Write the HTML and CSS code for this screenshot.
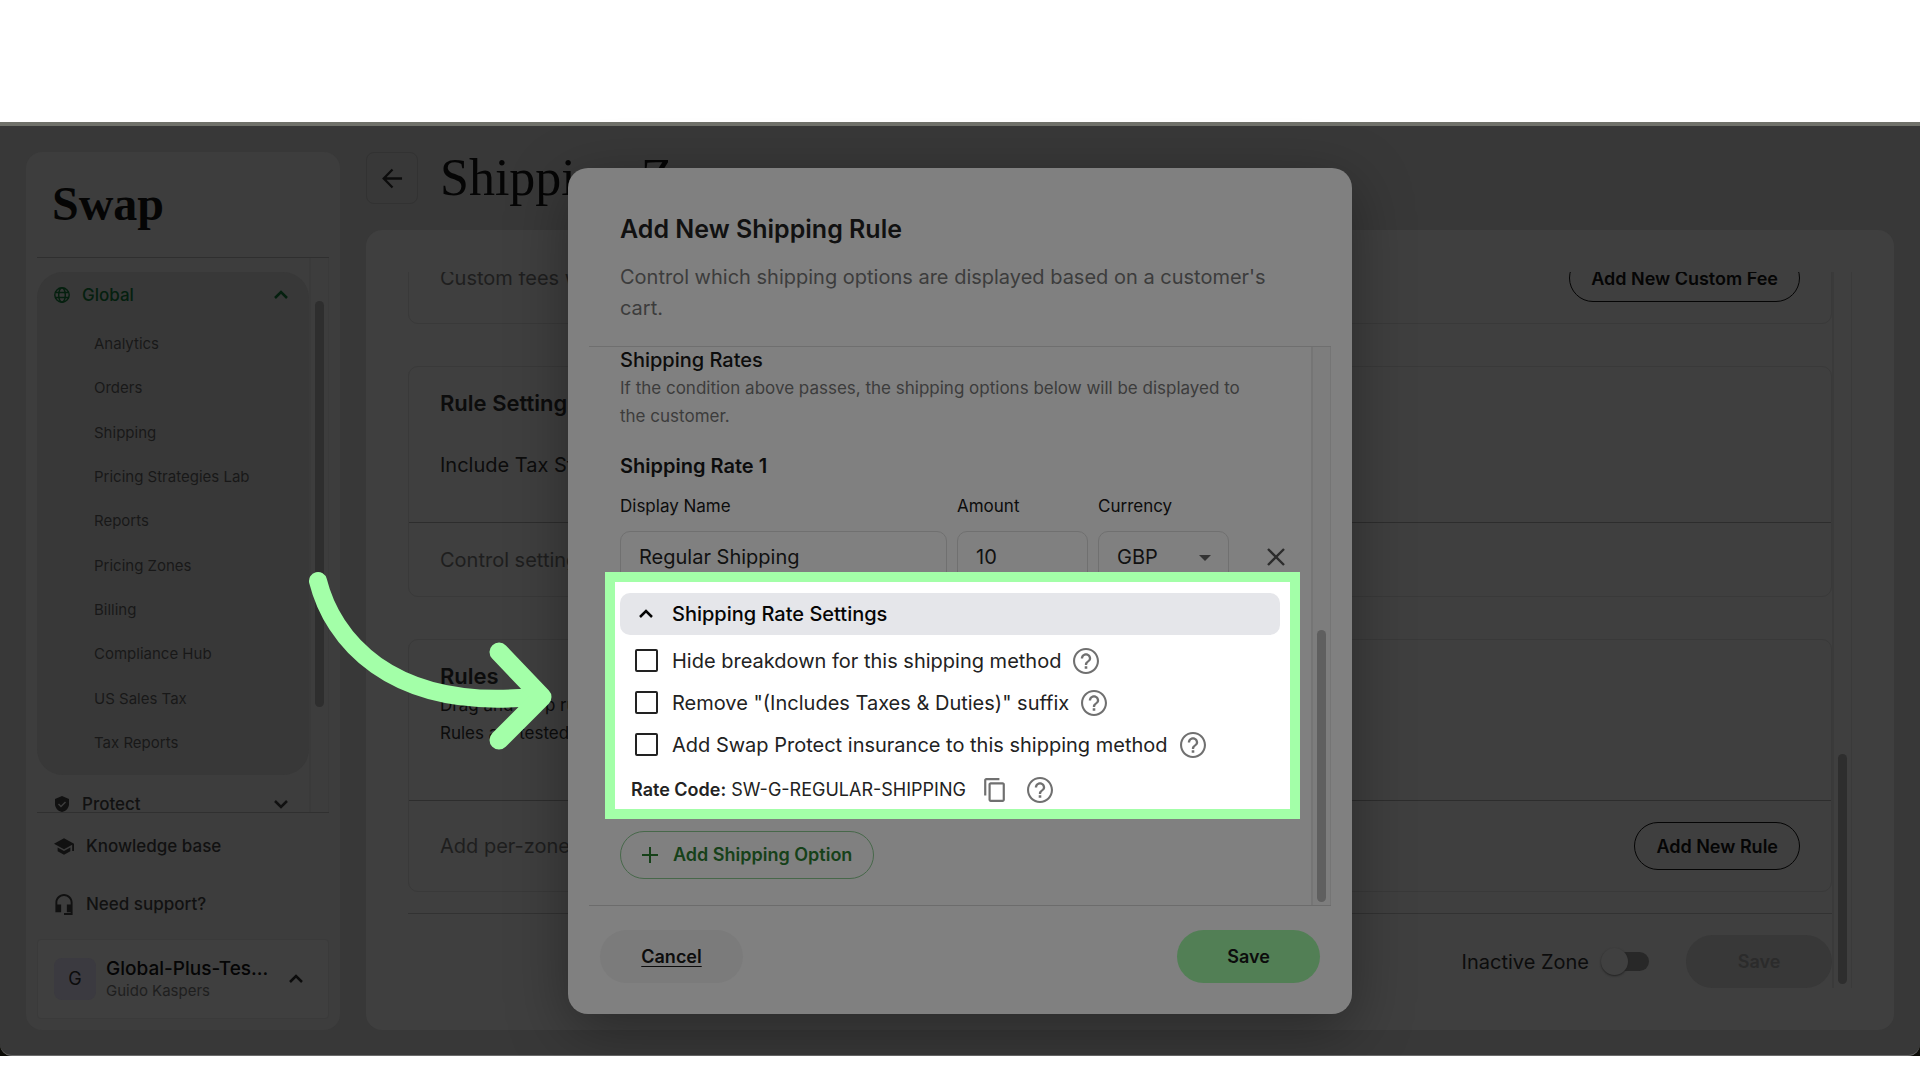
FILE: index.html
```html
<!DOCTYPE html>
<html lang="en">
  <head>
    <meta charset="UTF-8" />
    <meta name="viewport" content="width=device-width, initial-scale=1.0" />
    <title>Swap - Shipping Zone</title>
    <link rel="stylesheet" href="styles.css">
  </head>
  <body>
    <svg class="defs" width="0" height="0" aria-hidden="true">
      <symbol id="icon-help" viewBox="2 2 20 20">
        <path d="M11 18h2v-2h-2v2zm1-16C6.480 2 2 6.480 2 12s4.480 10 10 10 10-4.480 10-10S17.520 2 12 2zm0 18.400c-4.630 0-8.400-3.770-8.400-8.400S7.370 3.600 12 3.600s8.400 3.770 8.400 8.400-3.770 8.400-8.400 8.400zm0-14.400c-2.210 0-4 1.790-4 4h1.800c0-1.200 1-2.200 2.200-2.200s2.200 1 2.200 2.200c0 2-3.100 1.750-3.100 5h1.800c0-2.250 3.100-2.500 3.100-5 0-2.210-1.790-4-4-4z" />
      </symbol>
      <symbol id="icon-up" viewBox="0 0 16 16">
        <path d="M2 11l6-6 6 6" fill="none" stroke="currentColor" stroke-width="2.500" />
      </symbol>
      <symbol id="icon-down" viewBox="0 0 16 16">
        <path d="M2 5l6 6 6-6" fill="none" stroke="currentColor" stroke-width="2.500" />
      </symbol>
    </svg>

    <div class="screen">
    <div class="window">
      <aside class="sidebar">
        <div class="logo">Swap</div>

        <div class="nav-scroll">
          <nav class="nav">
            <div class="nav-group">
              <button class="nav-head active">
                <svg class="nav-icon" viewBox="0 0 16 16" fill="none" stroke="currentColor" stroke-width="1.400">
                  <circle cx="8" cy="8" r="7.200" />
                  <ellipse cx="8" cy="8" rx="3.300" ry="7.200" />
                  <path d="M1.500 5.500h13M1.500 10.500h13" />
                </svg>
                <span>Global</span>
                <svg class="chevron"><use href="#icon-up" /></svg>
              </button>
              <ul class="nav-list">
                <li><a href="#">Analytics</a></li>
                <li><a href="#">Orders</a></li>
                <li><a href="#">Shipping</a></li>
                <li><a href="#">Pricing Strategies Lab</a></li>
                <li><a href="#">Reports</a></li>
                <li><a href="#">Pricing Zones</a></li>
                <li><a href="#">Billing</a></li>
                <li><a href="#">Compliance Hub</a></li>
                <li><a href="#">US Sales Tax</a></li>
                <li><a href="#">Tax Reports</a></li>
              </ul>
            </div>
            <button class="nav-head">
              <svg class="nav-icon" viewBox="0 0 16 16">
                <path d="M8 0L1 3v5c0 4 3 7.200 7 8 4-.8 7-4 7-8V3z" fill="currentColor" />
                <path d="M4.500 8l2.500 2.500 4.500-4.500" fill="none" stroke="#3d3d3d" stroke-width="1.500" />
              </svg>
              <span>Protect</span>
              <svg class="chevron"><use href="#icon-down" /></svg>
            </button>
          </nav>
          <div class="track"><div class="thumb nav-thumb"></div></div>
        </div>

        <div class="side-links">
          <a href="#">
            <svg viewBox="1 3 22 18" fill="currentColor"><path d="M5 13.180v4L12 21l7-3.820v-4L12 17l-7-3.820zM12 3L1 9l11 6 9-4.910V17h2V9L12 3z" /></svg>
            Knowledge base
          </a>
          <a href="#">
            <svg class="headset" viewBox="3 1 18 22" fill="currentColor"><path d="M12 1c-4.970 0-9 4.030-9 9v10h6v-8H5v-2c0-3.870 3.130-7 7-7s7 3.130 7 7v2h-4v8h4v1h-7v2h9V10c0-4.970-4.030-9-9-9z" /></svg>
            Need support?
          </a>
        </div>

        <button class="account">
          <span class="avatar">G</span>
          <span class="account-text">
            <span class="account-name">Global-Plus-Tes...</span>
            <span class="account-user">Guido Kaspers</span>
          </span>
          <svg class="chevron"><use href="#icon-up" /></svg>
        </button>
      </aside>

      <main class="main">
        <header class="page-head">
          <button class="back" aria-label="Back">
            <svg viewBox="0 0 22 22" fill="none" stroke="currentColor" stroke-width="2.400"><path d="M21 11H2M11 1.500L1.800 11l9.200 9.500" /></svg>
          </button>
          <h1>Shipping Zone</h1>
        </header>

        <div class="panel">
          <div class="panel-scroll">
            <section class="card">
              <div class="card-foot">
                <span>Custom fees will be added</span>
                <button class="outline-btn">Add New Custom Fee</button>
              </div>
            </section>

            <section class="card">
              <div class="card-body settings-body">
                <h2>Rule Settings</h2>
                <p class="option">Include Tax Strategy</p>
              </div>
              <div class="card-foot short">
                <span>Control settings</span>
              </div>
            </section>

            <section class="card">
              <div class="card-body rules-body">
                <h2>Rules</h2>
                <p>Drag and drop rules</p>
                <p>Rules are tested</p>
              </div>
              <div class="card-foot">
                <span>Add per-zone rules</span>
                <button class="outline-btn">Add New Rule</button>
              </div>
            </section>

            <footer class="panel-foot">
              <label for="zone-active">Inactive Zone</label>
              <input type="checkbox" id="zone-active" class="switch" />
              <button class="pill disabled" disabled>Save</button>
            </footer>
          </div>
          <div class="track"><div class="thumb panel-thumb"></div></div>
        </div>
      </main>

      <div class="overlay">
        <div class="modal" role="dialog" aria-labelledby="modal-title">
          <header class="modal-head">
            <h2 id="modal-title">Add New Shipping Rule</h2>
            <p>Control which shipping options are displayed based on a customer's cart.</p>
          </header>

          <div class="modal-scroll">
            <div class="modal-body">
              <h3>Shipping Rates</h3>
              <p class="hint">If the condition above passes, the shipping options below will be displayed to the customer.</p>
              <h4>Shipping Rate 1</h4>

              <div class="fields">
                <div class="field name">
                  <label for="rate-name">Display Name</label>
                  <input type="text" id="rate-name" value="Regular Shipping" />
                </div>
                <div class="field">
                  <label for="rate-amount">Amount</label>
                  <input type="text" id="rate-amount" value="10" />
                </div>
                <div class="field">
                  <label for="rate-currency">Currency</label>
                  <div class="select">
                    <select id="rate-currency"><option>GBP</option></select>
                  </div>
                </div>
                <button class="remove" aria-label="Remove rate">
                  <svg viewBox="0 0 18 18" fill="none" stroke="currentColor" stroke-width="2.400"><path d="M1 1l16 16M17 1L1 17" /></svg>
                </button>
              </div>

              <div class="highlight">
                <button class="settings-head">
                  <svg class="chevron"><use href="#icon-up" /></svg>
                  Shipping Rate Settings
                </button>
                <div class="check-row">
                  <input type="checkbox" id="hide-breakdown" />
                  <label for="hide-breakdown">Hide breakdown for this shipping method</label>
                  <svg class="help"><use href="#icon-help" /></svg>
                </div>
                <div class="check-row">
                  <input type="checkbox" id="remove-suffix" />
                  <label for="remove-suffix">Remove "(Includes Taxes &amp; Duties)" suffix</label>
                  <svg class="help"><use href="#icon-help" /></svg>
                </div>
                <div class="check-row">
                  <input type="checkbox" id="add-protect" />
                  <label for="add-protect">Add Swap Protect insurance to this shipping method</label>
                  <svg class="help"><use href="#icon-help" /></svg>
                </div>
                <div class="code-row">
                  <span><b>Rate Code:</b> SW-G-REGULAR-SHIPPING</span>
                  <svg class="copy" viewBox="2 1 19 22"><path d="M16 1H4c-1.100 0-2 .9-2 2v14h2V3h12V1zm3 4H8c-1.100 0-2 .9-2 2v14c0 1.100.9 2 2 2h11c1.100 0 2-.9 2-2V7c0-1.100-.9-2-2-2zm0 16H8V7h11v14z" /></svg>
                  <svg class="help"><use href="#icon-help" /></svg>
                </div>
              </div>

              <button class="add-option">
                <svg viewBox="0 0 16 16" fill="none" stroke="currentColor" stroke-width="2"><path d="M8 0v16M0 8h16" /></svg>
                Add Shipping Option
              </button>
            </div>
            <div class="track"><div class="thumb modal-thumb"></div></div>
          </div>

          <footer class="modal-foot">
            <button class="pill cancel">Cancel</button>
            <button class="pill save">Save</button>
          </footer>
        </div>
      </div>

      <svg class="arrow" viewBox="0 0 252 186" fill="none" stroke="#a3ffa8" stroke-linecap="round" stroke-linejoin="round">
        <path d="M14 15C28 71 84 145 228 131" stroke-width="18" />
        <path d="M195 86L238 131L195 174" stroke-width="19" />
      </svg>
    </div>
    </div>
  </body>
</html>
```
FILE: styles.css
```css
* {
  box-sizing: border-box;
}
body {
  margin: 0;
  background-color: #fff;
  font-family: Inter, "Liberation Sans", sans-serif;
  font-size: 20px;
  color: #0c0c0c;
}
h1,
h2,
h3,
h4,
p,
ul {
  margin: 0;
  padding: 0;
}
button {
  font-family: inherit;
  color: inherit;
  border: none;
  background: none;
  padding: 0;
  cursor: pointer;
}
a {
  color: inherit;
  text-decoration: none;
}
svg {
  flex-shrink: 0;
}
.defs {
  position: absolute;
}
.screen {
  margin-top: 122px;
  background-color: #0b0b06;
}
.window {
  position: relative;
  display: flex;
  gap: 26px;
  height: calc(100vh - 146px);
  padding: 26px 26px 25px;
  background-color: #383838;
  border-top: 4px solid #70716a;
  border-bottom: 1px solid #6b6b6b;
  border-radius: 0 0 12px 12px;
}

/* Sidebar */
.sidebar {
  display: flex;
  flex-direction: column;
  flex-shrink: 0;
  width: 314px;
  padding: 0 11px 11px;
  background-color: #3d3d3d;
  border-radius: 16px;
}
.logo {
  height: 106px;
  padding: 22px 15px 0;
  border-bottom: 1px solid #2f2f2f;
  font-family: "Liberation Serif", serif;
  font-weight: bold;
  font-size: 48px;
  line-height: 60px;
  color: #050505;
}
.nav-scroll {
  display: flex;
  flex: 1;
  min-height: 0;
  overflow: hidden;
  border-bottom: 1px solid #303030;
}
.nav {
  flex: 1;
  padding-top: 14px;
}
.nav-group {
  margin-bottom: 6px;
  padding-bottom: 22px;
  background-color: #383838;
  border-radius: 26px;
}
.nav-head {
  display: flex;
  align-items: center;
  gap: 12px;
  width: 100%;
  height: 46px;
  padding: 0 20px 0 17px;
  font-size: 17px;
  font-weight: 500;
  text-align: left;
  color: #111;
}
.nav-head.active {
  color: #05200f;
}
.nav-head span {
  flex: 1;
}
.nav-icon {
  width: 16px;
  height: 16px;
}
.chevron {
  width: 16px;
  height: 16px;
}
.nav-list {
  display: flex;
  flex-direction: column;
  justify-content: space-between;
  height: 435px;
  padding: 16px 0 0 57px;
  list-style: none;
  font-size: 15px;
  line-height: 20px;
  color: #181818;
}
.track {
  flex-shrink: 0;
  width: 20px;
  padding: 0 4px;
  border-left: 2px solid #3a3a3a;
  border-right: 1px solid #3a3a3a;
}
.thumb {
  border-radius: 5px;
  background-color: #2e2e2e;
}
.nav-thumb {
  height: 406px;
  margin-top: 43px;
}
.side-links {
  padding-top: 4px;
}
.side-links a {
  display: flex;
  align-items: center;
  gap: 12px;
  height: 58px;
  padding-left: 17px;
  font-size: 17px;
  font-weight: 500;
  color: #111;
}
.side-links svg {
  width: 20px;
  height: 17px;
}
.side-links .headset {
  height: 21px;
}
.account {
  display: flex;
  align-items: center;
  gap: 10px;
  height: 80px;
  margin-top: 6px;
  padding: 0 24px 0 16px;
  background-color: #3f3f3f;
  border: 1px solid #3a3a3a;
  border-radius: 4px;
  text-align: left;
}
.avatar {
  width: 42px;
  height: 42px;
  border-radius: 8px;
  background-color: #3b3a40;
  font-size: 18px;
  line-height: 42px;
  text-align: center;
}
.account-text {
  flex: 1;
}
.account-name {
  display: block;
  font-size: 19px;
  font-weight: 500;
  line-height: 24px;
  color: #050505;
}
.account-user {
  display: block;
  font-size: 15px;
  line-height: 20px;
  color: #1e1e1e;
}

/* Page behind the modal */
.main {
  display: flex;
  flex-direction: column;
  flex: 1;
  gap: 26px;
  min-width: 0;
}
.page-head {
  display: flex;
  align-items: center;
  gap: 22px;
  height: 52px;
}
.back {
  display: flex;
  align-items: center;
  justify-content: center;
  width: 52px;
  height: 52px;
  border: 1px solid #323232;
  border-radius: 8px;
}
.back svg {
  width: 21px;
  height: 21px;
}
h1 {
  font-family: "Liberation Serif", serif;
  font-size: 52px;
  font-weight: normal;
  line-height: 52px;
  color: #050505;
}
.panel {
  display: flex;
  flex: 1;
  min-height: 0;
  padding: 42px;
  background-color: #3f3f3f;
  border-radius: 16px;
}
.panel-scroll {
  display: flex;
  flex: 1;
  flex-direction: column;
  justify-content: flex-end;
  gap: 42px;
  overflow: hidden;
}
.card {
  flex-shrink: 0;
  border: 1px solid #393939;
  border-radius: 10px;
}
.card-body {
  padding: 21px 31px;
  border-bottom: 1px solid #2d2d2d;
}
.card-body p {
  font-size: 17px;
  line-height: 28px;
}
.card-body .option {
  margin-top: 32px;
  font-size: 20px;
  line-height: 30px;
}
.settings-body {
  height: 156px;
}
.rules-body {
  height: 161px;
}
.card h2 {
  font-size: 22px;
  font-weight: 600;
  line-height: 30px;
}
.card-foot {
  display: flex;
  align-items: center;
  justify-content: space-between;
  padding: 21px 31px;
  color: #1e1e1e;
}
.card-foot.short {
  height: 73px;
}
.outline-btn {
  height: 48px;
  padding: 0 21px;
  border: 1px solid #050505;
  border-radius: 24px;
  font-size: 18px;
  font-weight: 600;
  color: #050505;
}
.panel-foot {
  display: flex;
  align-items: center;
  justify-content: flex-end;
  margin-top: -21px;
  padding-top: 21px;
  border-top: 1px solid #323232;
}
.switch {
  appearance: none;
  display: flex;
  align-items: center;
  width: 40px;
  height: 19px;
  margin: 0 37px 0 20px;
  border-radius: 10px;
  background-color: #282828;
}
.switch::before {
  content: "";
  flex-shrink: 0;
  width: 27px;
  height: 27px;
  margin-left: -8px;
  border-radius: 50%;
  background-color: #404040;
  box-shadow: 0 1px 2px #222;
}
.pill {
  width: 143px;
  height: 53px;
  border-radius: 27px;
  font-size: 18px;
  font-weight: 600;
}
.pill.disabled {
  width: 146px;
  background-color: #383838;
  color: #2b2b2b;
}
.panel-thumb {
  height: 230px;
  margin-top: 482px;
}

/* Modal */
.overlay {
  position: absolute;
  inset: 0;
  display: flex;
  align-items: center;
  justify-content: center;
}
.modal {
  width: 784px;
  padding: 0 21px 31px;
  background-color: #808080;
  border-radius: 20px;
  box-shadow: 0 16px 60px rgba(0, 0, 0, 0.35);
}
.modal-head {
  padding: 43px 31px 22px;
  border-bottom: 1px solid #6f6f6f;
}
.modal-head h2 {
  font-size: 25px;
  font-weight: 600;
  line-height: 36px;
  color: #111;
}
.modal-head p {
  margin-top: 15px;
  line-height: 31px;
  color: #3c3c3c;
}
.modal-scroll {
  display: flex;
  border-bottom: 1px solid #6c6c6c;
}
.modal-scroll .track {
  background-color: #7d7d7d;
  border-color: #757575;
}
.modal-body {
  flex: 1;
  min-width: 0;
  padding: 0 24px 26px 31px;
}
h3 {
  font-size: 20px;
  font-weight: 500;
  line-height: 26px;
}
.hint {
  margin-top: 1px;
  padding-right: 24px;
  font-size: 17px;
  line-height: 28px;
  color: #3c3c3c;
}
h4 {
  margin-top: 22px;
  font-size: 20px;
  font-weight: 600;
  line-height: 28px;
}
.fields {
  display: flex;
  align-items: flex-end;
  gap: 10px;
  margin-top: 13px;
}
.field {
  width: 131px;
}
.field.name {
  width: 327px;
}
.field label {
  display: block;
  margin-bottom: 12px;
  font-size: 17px;
  line-height: 26px;
}
.field input,
.field select {
  appearance: none;
  display: block;
  width: 100%;
  height: 52px;
  padding: 0 18px;
  background: none;
  border: 1px solid #707070;
  border-radius: 10px;
  font-family: inherit;
  font-size: 20px;
  color: #111;
}
.select {
  position: relative;
}
.select::after {
  content: "";
  position: absolute;
  top: 24px;
  right: 18px;
  border: 6px solid transparent;
  border-top-color: #333;
  border-bottom: none;
}
.remove {
  display: flex;
  align-items: center;
  justify-content: center;
  width: 22px;
  height: 52px;
  margin-left: auto;
  color: #2c2c2c;
}
.remove svg {
  width: 18px;
  height: 18px;
}
.highlight {
  position: relative;
  height: 247px;
  margin: -11px -13px 12px -15px;
  padding: 11px 10px 0 5px;
  border: 10px solid #a3ffa8;
  background-color: #fff;
}
.settings-head {
  display: flex;
  align-items: center;
  gap: 18px;
  width: 100%;
  height: 42px;
  margin-bottom: 5px;
  padding-left: 18px;
  border-radius: 10px;
  background-color: #e5e6ea;
  font-size: 20px;
  font-weight: 500;
  color: #050505;
}
.check-row {
  display: flex;
  align-items: center;
  height: 42px;
  padding-left: 15px;
  color: #222;
}
.check-row input {
  appearance: none;
  width: 23px;
  height: 23px;
  margin: 0 14px 0 0;
  border: 2px solid #222;
  border-radius: 2px;
}
.help {
  width: 26px;
  height: 26px;
  margin-left: 12px;
  fill: #707070;
}
.code-row {
  display: flex;
  align-items: center;
  height: 48px;
  padding-left: 11px;
  font-size: 18px;
  color: #222;
}
.code-row b {
  font-weight: 600;
}
.copy {
  width: 21px;
  height: 24px;
  margin: 0 10px 0 18px;
  fill: #707070;
}
.add-option {
  display: flex;
  align-items: center;
  gap: 15px;
  height: 48px;
  padding: 0 21px;
  border: 1px solid #47684a;
  border-radius: 24px;
  font-size: 18px;
  font-weight: 600;
  color: #164119;
}
.add-option svg {
  width: 16px;
  height: 16px;
}
.modal-thumb {
  height: 272px;
  margin-top: 283px;
  background-color: #5f5f5f;
}
.modal-foot {
  display: flex;
  justify-content: space-between;
  padding: 24px 11px 0;
}
.cancel {
  background-color: #7b7b7b;
  text-decoration: underline;
  text-underline-offset: 3px;
}
.save {
  background-color: #527f55;
}

/* Pointer drawn over the page */
.arrow {
  position: absolute;
  top: 440px;
  left: 304px;
  width: 252px;
  height: 186px;
}
```
